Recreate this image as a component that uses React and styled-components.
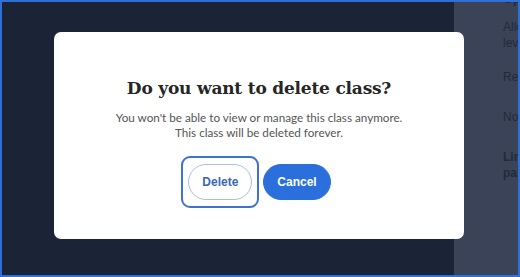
import React from "react";
import styled, { createGlobalStyle } from "styled-components";

const GlobalStyle = createGlobalStyle`
  html, body {
    margin: 0;
    padding: 0;
  }
  body {
    font-family: "Liberation Sans", Arial, sans-serif;
  }
  * { box-sizing: border-box; }
`;

const Frame = styled.div`
  position: relative;
  width: 520px;
  height: 277px;
  border: 2px solid #2f6fd8;
  display: grid;
  grid-template-columns: 1fr 64px;
  overflow: hidden;
  background: #1b2337;
`;

const Backdrop = styled.div`
  background: #1b2337;
`;

const SidePanel = styled.aside`
  background: #3a4357;
  padding: 0 0 0 49px;
  overflow: hidden;
  white-space: nowrap;
  color: #232a3b;
  font-size: 12px;
`;

const SideHeading = styled.div`
  font-weight: 700;
  font-size: 13px;
  margin-top: -11px;
  height: 16px;
`;

const SideText = styled.p`
  margin: ${props => props.mt}px 0 0;
  line-height: 16px;
  font-weight: ${props => props.bold ? 700 : 400};
`;

const Modal = styled.div`
  position: absolute;
  left: 52px;
  top: 30px;
  width: 410px;
  height: 207px;
  background: #fff;
  border-radius: 7px;
  display: flex;
  flex-direction: column;
  align-items: center;
  padding-top: 45px;
`;

const Title = styled.h2`
  margin: 0;
  font-family: "DejaVu Serif", "Liberation Serif", serif;
  font-weight: 700;
  font-size: 17px;
  line-height: 22px;
  letter-spacing: -0.2px;
  color: #262626;
`;

const Body = styled.p`
  margin: 11px 0 0;
  font-family: Lato, "Liberation Sans", sans-serif;
  font-size: 11.7px;
  line-height: 15px;
  color: #555;
  text-align: center;
`;

const Actions = styled.div`
  display: flex;
  align-items: center;
  gap: 4px;
  margin: 16px 6px 0 0;
`;

const FocusRing = styled.div`
  padding: 6px 5px;
  border: 2px solid #3d72d0;
  border-radius: 9px;
  display: flex;
`;

const Button = styled.button`
  height: 36px;
  padding: 0 13px;
  border-radius: 18px;
  font-family: "Liberation Sans", Arial, sans-serif;
  font-weight: 700;
  font-size: 12px;
  cursor: pointer;
  border: 1px solid ${props => props.primary ? '#2a6fdb' : '#a9bde3'};
  background: ${props => props.primary ? '#2a6fdb' : '#fff'};
  color: ${props => props.primary ? '#fff' : '#3b65b8'};
`;

export default function App() {
  return (
    <>
      <GlobalStyle />
      <Frame>
        <Backdrop />
        <SidePanel>
          <SideHeading>Options</SideHeading>
          <SideText mt={12}>Allow students to<br />level up</SideText>
          <SideText mt={18}>Reading</SideText>
          <SideText mt={24}>Notes</SideText>
          <SideText mt={24} bold>Link<br />parents</SideText>
        </SidePanel>
        <Modal>
          <Title>Do you want to delete class?</Title>
          <Body>
            You won't be able to view or manage this class anymore.
            <br />
            This class will be deleted forever.
          </Body>
          <Actions>
            <FocusRing>
              <Button>Delete</Button>
            </FocusRing>
            <Button primary>Cancel</Button>
          </Actions>
        </Modal>
      </Frame>
    </>
  );
}
